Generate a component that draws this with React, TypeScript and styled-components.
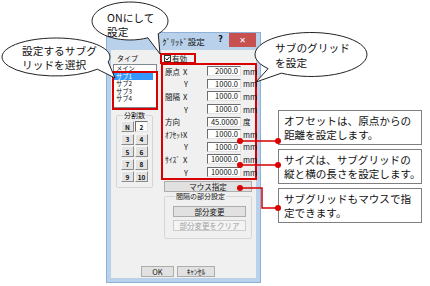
import React from "react";
import styled, { createGlobalStyle } from "styled-components";

const GlobalStyle = createGlobalStyle`
  html, body { margin: 0; padding: 0; background: #fff; }
  body { font-family: "Noto Sans CJK JP", "Noto Sans", sans-serif; color: #111; }
`;

const RED = "#d80000";

const Canvas = styled.div`
  position: relative;
  width: 430px;
  height: 286px;
  box-sizing: border-box;
  padding: 32px 0 0 106px;
  overflow: hidden;
  background: #fff;
`;

/* ---------- dialog window ---------- */

const Window = styled.div`
  width: 155px;
  height: 251px;
  box-sizing: border-box;
  display: flex;
  flex-direction: column;
  padding: 0 4px 4px;
  background: #b9d1ea;
  border: 1px solid #8eb1d8;
  font-size: 7.5px;
  color: #111;
`;

const TitleBar = styled.div`
  height: 17px;
  display: grid;
  grid-template-columns: 1fr auto 1fr;
  align-items: start;
`;

const Title = styled.div`
  grid-column: 2;
  font-size: 8.5px;
  line-height: 17px;
  white-space: nowrap;
`;

const Caption = styled.div`
  grid-column: 3;
  justify-self: end;
  display: flex;
  gap: 6px;
`;

const HelpMark = styled.span`
  font-family: "DejaVu Sans", sans-serif;
  font-weight: bold;
  font-size: 8px;
  line-height: 14px;
`;

const CloseButton = styled.div`
  width: 27px;
  height: 14px;
  display: flex;
  align-items: center;
  justify-content: center;
  background: #c75050;
  color: #fff;
  font-family: "DejaVu Sans", sans-serif;
  font-size: 8px;
  font-weight: bold;
`;

const Client = styled.div`
  flex: 1;
  display: flex;
  flex-direction: column;
  background: #f0f0f0;
`;

const Body = styled.div`
  display: flex;
  gap: 2px;
  padding-left: 2px;
`;

const LeftCol = styled.div`
  width: 45px;
  display: flex;
  flex-direction: column;
`;

const RightCol = styled.div`
  width: 96px;
  display: flex;
  flex-direction: column;
`;

const SmallLabel = styled.div`
  margin: 4px 0 0 4px;
  font-size: 7px;
  line-height: 9px;
`;

const ListBox = styled.div`
  position: relative;
  margin-top: 1px;
  width: 44px;
  height: 44px;
  box-sizing: border-box;
  border: 1px solid #828790;
  background: #fff;
`;

const ListScroll = styled.div`
  height: 100%;
  overflow: hidden;
  padding: 0 3px 0 0;
  box-sizing: border-box;
`;

const ListItem = styled.div<{ $selected?: boolean }>`
  height: 7.6px;
  padding-left: 2px;
  font-size: 6.3px;
  line-height: 7.6px;
  white-space: nowrap;
  background: ${(p) => (p.$selected ? "#3399ff" : "transparent")};
  color: ${(p) => (p.$selected ? "#fff" : "#111")};
`;

const ListMark = styled.div`
  position: absolute;
  left: -2px;
  top: 6px;
  right: -2px;
  bottom: -3px;
  border: 2px solid ${RED};
`;

const Group = styled.fieldset<{ $width: number }>`
  width: ${(p) => p.$width}px;
  box-sizing: border-box;
  margin: 0;
  border: 1px solid #d5d5d5;
  border-radius: 2px;
  min-inline-size: 0;
`;

const GroupLegend = styled.legend`
  margin-left: 2px;
  padding: 0 1px;
  font-size: 7px;
  line-height: 8px;
  white-space: nowrap;
`;

const CountGroup = styled(Group)`
  margin: 3px 0 0 3px;
  padding: 2px 4px 5px;
`;

const CountGrid = styled.div`
  display: grid;
  grid-template-columns: 13px 13px;
  grid-auto-rows: 11px;
  column-gap: 1px;
  row-gap: 1.5px;
`;

const CountButton = styled.div<{ $pressed?: boolean }>`
  display: flex;
  align-items: center;
  justify-content: center;
  box-sizing: border-box;
  font-size: 6.5px;
  font-weight: bold;
  background: ${(p) => (p.$pressed ? "#fbfbfb" : "#e3e3e3")};
  border: 1px solid #adadad;
  border-top-color: ${(p) => (p.$pressed ? "#6e6e6e" : "#f6f6f6")};
  border-left-color: ${(p) => (p.$pressed ? "#6e6e6e" : "#f6f6f6")};
  border-right-color: ${(p) => (p.$pressed ? "#e3e3e3" : "#8c8c8c")};
  border-bottom-color: ${(p) => (p.$pressed ? "#e3e3e3" : "#8c8c8c")};
`;

const CheckRow = styled.div`
  margin-top: 3px;
  width: 36px;
  height: 11px;
  box-sizing: border-box;
  display: flex;
  align-items: center;
  gap: 1px;
  padding-left: 2px;
  border: 2px solid ${RED};
  font-size: 7.5px;
  white-space: nowrap;
`;

const CheckBox = styled.span`
  width: 7px;
  height: 7px;
  box-sizing: border-box;
  border: 1px solid #333;
  background: #fff;
  display: flex;
  align-items: center;
  justify-content: center;
`;

const FieldPanel = styled.div`
  margin: -1px 0 0 1px;
  width: 96px;
  box-sizing: border-box;
  display: grid;
  grid-auto-rows: 12.6px;
  border: 2px solid ${RED};
`;

const FieldRow = styled.div`
  display: grid;
  grid-template-columns: 18px 24px 34px 14px;
  align-items: center;
  padding-left: 2px;
  white-space: nowrap;
  line-height: 9px;
`;

const Axis = styled.span<{ $indent?: boolean }>`
  padding-left: ${(p) => (p.$indent ? 1 : 0)}px;
`;

const NumberBox = styled.div`
  height: 10px;
  box-sizing: border-box;
  padding-right: 2px;
  text-align: right;
  background: #fff;
  border: 1px solid #e3e3e3;
  border-top-color: #6d6d6d;
  border-left-color: #6d6d6d;
  font-size: 7.5px;
  line-height: 8px;
`;

const Unit = styled.span`
  padding-left: 2px;
  font-size: 7.5px;
`;

const PushButton = styled.div<{ $width: number; $disabled?: boolean }>`
  width: ${(p) => p.$width}px;
  height: 11px;
  box-sizing: border-box;
  display: flex;
  align-items: center;
  justify-content: center;
  background: ${(p) => (p.$disabled ? "#f4f4f4" : "#e1e1e1")};
  border: 1px solid ${(p) => (p.$disabled ? "#cdcdcd" : "#adadad")};
  color: ${(p) => (p.$disabled ? "#a0a0a0" : "#111")};
  font-size: 7.5px;
  white-space: nowrap;
`;

const MouseButton = styled(PushButton)`
  margin: 1px 0 0 4px;
`;

const PartGroup = styled(Group)`
  margin: 0 0 0 4px;
  padding: 6px 0 7px 8px;
  display: flex;
  flex-direction: column;
  gap: 3px;
`;

const Footer = styled.div`
  margin-top: auto;
  display: flex;
  gap: 3px;
  padding: 0 0 1px 30px;
`;

/* ---------- annotations ---------- */

const Overlay = styled.svg`
  position: absolute;
  left: 0;
  top: 0;
  pointer-events: none;
`;

const BubbleText = styled.div<{ $x: number; $y: number; $lh: number }>`
  position: absolute;
  left: ${(p) => p.$x}px;
  top: ${(p) => p.$y}px;
  font-size: 10.7px;
  line-height: ${(p) => p.$lh}px;
  white-space: nowrap;
  color: #111;
`;

const Notes = styled.div`
  position: absolute;
  left: 278px;
  top: 110px;
  display: flex;
  flex-direction: column;
  gap: 4px;
`;

const Note = styled.div`
  width: 144px;
  height: 35px;
  box-sizing: border-box;
  padding: 3px 0 0 5px;
  border: 1px solid #7f7f7f;
  background: #fff;
  font-size: 10.6px;
  line-height: 13.5px;
  white-space: nowrap;
  color: #111;
`;

type Bubble = {
  cx: number; cy: number; rx: number; ry: number;
  a1: number; a2: number; tip: [number, number];
};

const bubblePath = (b: Bubble) => {
  const pt = (a: number) => [
    b.cx + b.rx * Math.cos((a * Math.PI) / 180),
    b.cy + b.ry * Math.sin((a * Math.PI) / 180),
  ];
  const [x1, y1] = pt(b.a1);
  const [x2, y2] = pt(b.a2);
  return `M${x1} ${y1} A${b.rx} ${b.ry} 0 1 0 ${x2} ${y2} L${b.tip[0]} ${b.tip[1]} Z`;
};

const bubbles: Bubble[] = [
  { cx: 56, cy: 57, rx: 54, ry: 19, a1: 15, a2: 40, tip: [115, 78] },
  { cx: 130, cy: 21, rx: 38, ry: 19, a1: 42, a2: 62, tip: [160, 54] },
  { cx: 311, cy: 54.5, rx: 56, ry: 22, a1: 122, a2: 140, tip: [256, 82] },
];

const fields = [
  { name: "原点", axis: "X", value: "2000.0", unit: "mm" },
  { name: "", axis: "Y", value: "1000.0", unit: "mm" },
  { name: "間隔", axis: "X", value: "1000.0", unit: "mm" },
  { name: "", axis: "Y", value: "1000.0", unit: "mm" },
  { name: "方向", axis: "", value: "45.0000", unit: "度" },
  { name: "ｵﾌｾｯﾄ", axis: "X", value: "1000.0", unit: "mm" },
  { name: "", axis: "Y", value: "1000.0", unit: "mm" },
  { name: "ｻｲｽﾞ", axis: "X", value: "10000.0", unit: "mm" },
  { name: "", axis: "Y", value: "10000.0", unit: "mm" },
];

const counts = ["N", "2", "3", "4", "5", "6", "7", "8", "9", "10"];

export default function App() {
  return (
    <>
      <GlobalStyle />
      <Canvas>
        <Window>
          <TitleBar>
            <Title>ｸﾞﾘｯﾄﾞ設定</Title>
            <Caption>
              <HelpMark>?</HelpMark>
              <CloseButton>✕</CloseButton>
            </Caption>
          </TitleBar>
          <Client>
            <Body>
              <LeftCol>
                <SmallLabel>タイプ</SmallLabel>
                <ListBox>
                  <ListScroll>
                    <ListItem>メイン</ListItem>
                    <ListItem $selected>サブ1</ListItem>
                    <ListItem>サブ2</ListItem>
                    <ListItem>サブ3</ListItem>
                    <ListItem>サブ4</ListItem>
                  </ListScroll>
                  <ListMark />
                </ListBox>
                <CountGroup $width={37}>
                  <GroupLegend>分割数</GroupLegend>
                  <CountGrid>
                    {counts.map((c) => (
                      <CountButton key={c} $pressed={c === "2"}>
                        {c}
                      </CountButton>
                    ))}
                  </CountGrid>
                </CountGroup>
              </LeftCol>
              <RightCol>
                <CheckRow>
                  <CheckBox>
                    <svg width="5" height="5" viewBox="0 0 5 5">
                      <path d="M0.5 2.5 L2 4 L4.6 0.8" fill="none" stroke="#111" strokeWidth="1" />
                    </svg>
                  </CheckBox>
                  有効
                </CheckRow>
                <FieldPanel>
                  {fields.map((f, i) => (
                    <FieldRow key={i}>
                      <span>{f.name}</span>
                      <Axis $indent={f.axis === "Y"}>{f.axis}</Axis>
                      <NumberBox>{f.value}</NumberBox>
                      <Unit>{f.unit}</Unit>
                    </FieldRow>
                  ))}
                </FieldPanel>
                <MouseButton $width={88}>マウス指定</MouseButton>
                <PartGroup $width={88}>
                  <GroupLegend>間隔の部分設定</GroupLegend>
                  <PushButton $width={73}>部分変更</PushButton>
                  <PushButton $width={73} $disabled>
                    部分変更をクリア
                  </PushButton>
                </PartGroup>
              </RightCol>
            </Body>
            <Footer>
              <PushButton $width={33}>OK</PushButton>
              <PushButton $width={38}>ｷｬﾝｾﾙ</PushButton>
            </Footer>
          </Client>
        </Window>

        <Overlay width="430" height="286">
          {bubbles.map((b, i) => (
            <path key={i} d={bubblePath(b)} fill="#fff" stroke="#222" strokeWidth="1" />
          ))}
          <g stroke={RED} strokeWidth="1.5" fill="none">
            <line x1="240" y1="141" x2="278" y2="141" />
            <line x1="240" y1="165" x2="278" y2="165" />
            <polyline points="240,188 262,188 262,208 278,208" />
          </g>
          <g fill={RED}>
            <circle cx="240" cy="141" r="3" />
            <circle cx="240" cy="165" r="3" />
            <circle cx="240" cy="188" r="3" />
          </g>
        </Overlay>

        <BubbleText $x={22} $y={43.5} $lh={14}>
          設定するサブグ
          <br />
          リッドを選択
        </BubbleText>
        <BubbleText $x={107} $y={10.5} $lh={14.5}>
          ONにして
          <br />
          設定
        </BubbleText>
        <BubbleText $x={275} $y={39.5} $lh={15}>
          サブのグリッド
          <br />
          を設定
        </BubbleText>

        <Notes>
          <Note>
            オフセットは、原点からの
            <br />
            距離を設定します。
          </Note>
          <Note>
            サイズは、サブグリッドの
            <br />
            縦と横の長さを設定します。
          </Note>
          <Note>
            サブグリッドもマウスで指
            <br />
            定できます。
          </Note>
        </Notes>

        <Overlay width="430" height="286">
          <g fill={RED}>
            <circle cx="278" cy="141" r="3" />
            <circle cx="278" cy="165" r="3" />
            <circle cx="278" cy="208" r="3" />
          </g>
        </Overlay>
      </Canvas>
    </>
  );
}
